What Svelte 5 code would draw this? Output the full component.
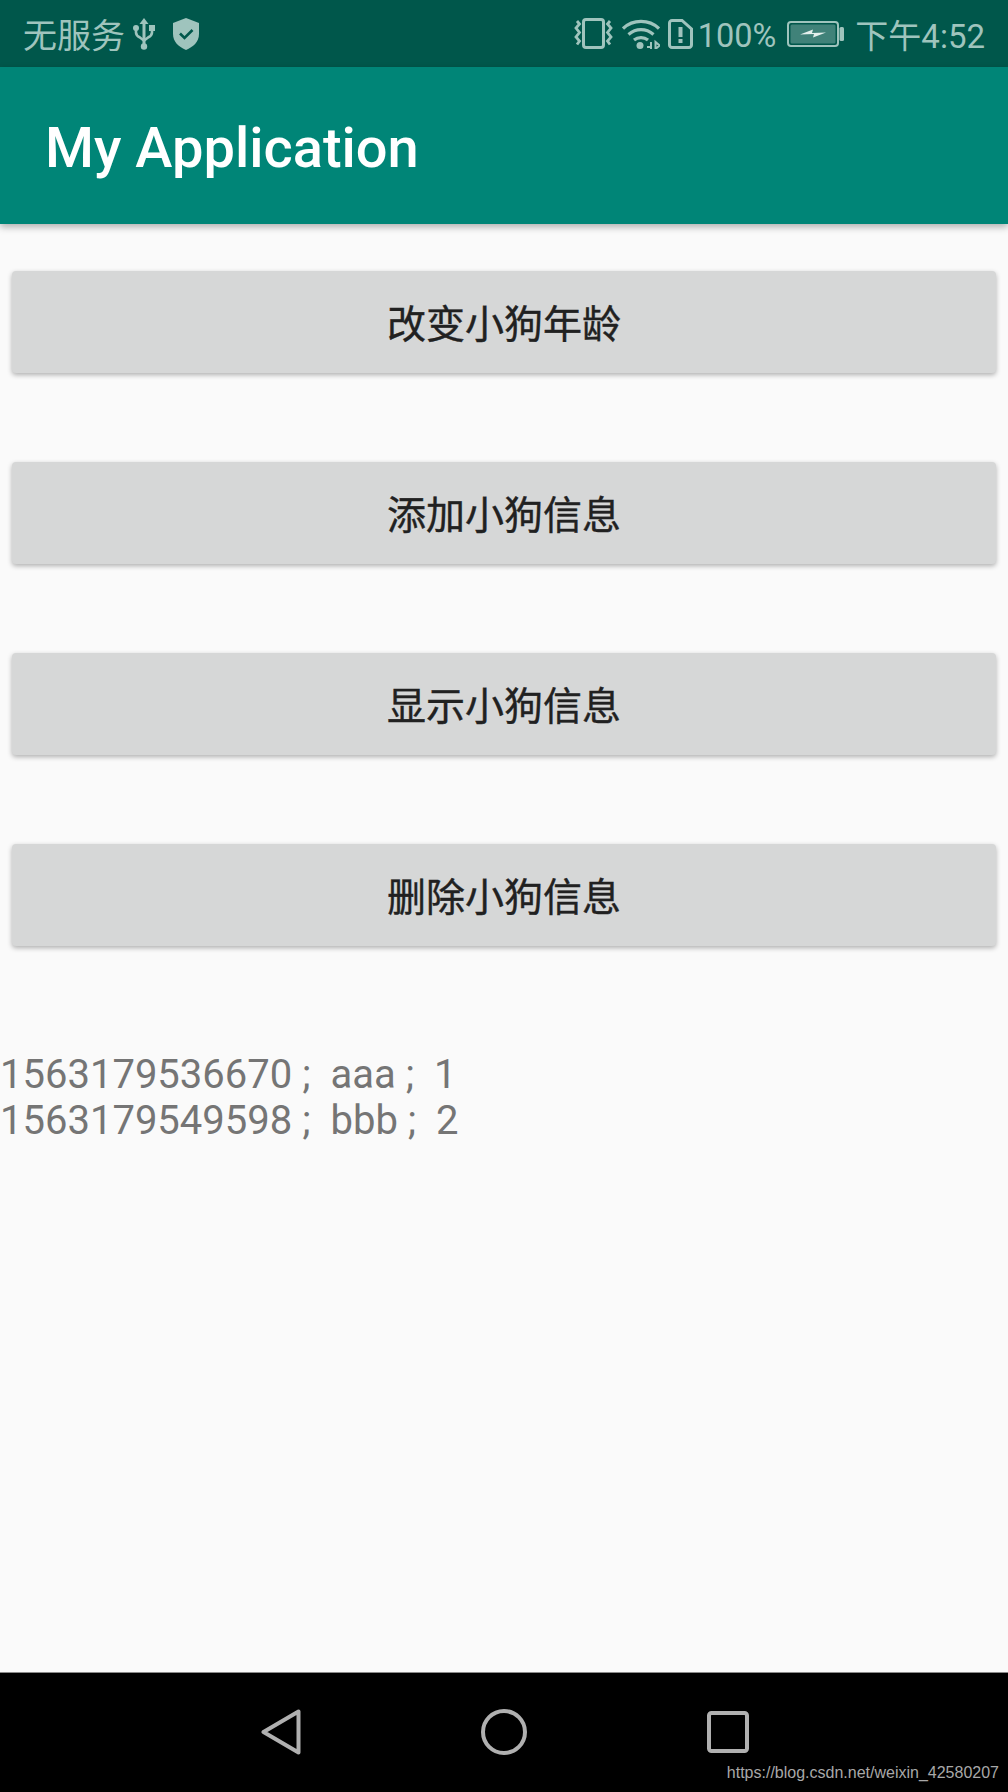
<script>
    const actions = ['改变小狗年龄', '添加小狗信息', '显示小狗信息', '删除小狗信息'];
    const dogs = [
        { id: '1563179536670', name: 'aaa', age: 1 },
        { id: '1563179549598', name: 'bbb', age: 2 },
    ];
</script>

<div class="phone">
    <header class="status">
        <div class="status-left">
            <span class="carrier">无服务</span>
            <svg class="usb" viewBox="0 0 22 32" width="22" height="32">
                <circle cx="11" cy="28.500" r="3.200" fill="currentColor" />
                <path d="M11 3v26" stroke="currentColor" stroke-width="3" />
                <path d="M11 0l4.500 6h-9z" fill="currentColor" />
                <path d="M3 11v3.500c0 3 2 4 4 5l4 3 4-3c2-1 4-2 4-5V11" fill="none" stroke="currentColor" stroke-width="2.600" />
                <circle cx="3" cy="10" r="3" fill="currentColor" />
                <rect x="16" y="7" width="6" height="6" fill="currentColor" />
            </svg>
            <svg class="shield" viewBox="0 0 28 32" width="28" height="32">
                <path d="M14 0l13 5v11c0 8-6 13-13 16C7 29 1 24 1 16V5z" fill="currentColor" />
                <path d="M8 15.500l4.500 4.500 8-8" fill="none" stroke="#00574b" stroke-width="2.600" />
            </svg>
        </div>
        <div class="status-right">
            <svg class="vibrate" viewBox="0 0 39 31" width="39" height="31">
                <rect x="9.500" y="1.500" width="20" height="28" rx="2.500" fill="none" stroke="currentColor" stroke-width="3" />
                <path d="M3 3l2.500 3-3.500 4 3.500 4.500L2 19l3.500 4L3 26.500M36 3l-2.500 3 3.500 4-3.500 4.500L37 19l-3.500 4 2.500 3.500" fill="none" stroke="currentColor" stroke-width="2.800" />
            </svg>
            <svg class="wifi" viewBox="0 0 38 30" width="38" height="30">
                <path d="M1 9.500C11 0 27 0 37 9.500" fill="none" stroke="currentColor" stroke-width="3.200" />
                <path d="M6.500 15.500c7.500-6.500 17.500-6.500 25 0" fill="none" stroke="currentColor" stroke-width="3.200" />
                <path d="M12 21c4-3.300 10-3.300 14 0" fill="none" stroke="currentColor" stroke-width="3.200" />
                <circle cx="18" cy="26.500" r="3.500" fill="currentColor" />
                <path d="M29 23v7M25 28h5M33.500 23v7l4-3.500z" fill="none" stroke="currentColor" stroke-width="2" />
            </svg>
            <svg class="sim" viewBox="0 0 25 30" width="25" height="30">
                <path d="M4 1.500h10l9.500 8.500v16a2.500 2.500 0 0 1-2.500 2.500H4A2.500 2.500 0 0 1 1.500 26V4A2.500 2.500 0 0 1 4 1.500z" fill="none" stroke="currentColor" stroke-width="3" />
                <rect x="10.500" y="8" width="4" height="10" fill="currentColor" />
                <rect x="10.500" y="20" width="4" height="4" fill="currentColor" />
            </svg>
            <span class="percent">100%</span>
            <svg class="battery" viewBox="0 0 57 26" width="57" height="26">
                <rect x="1" y="1" width="50" height="24" rx="3" fill="none" stroke="currentColor" stroke-width="2" />
                <rect x="3.500" y="3.500" width="45" height="19" rx="1.500" fill="currentColor" fill-opacity="0.4" />
                <rect x="52.500" y="6" width="4.500" height="14" rx="1.500" fill="currentColor" />
                <path d="M13 13.500l13-5-1 3.500 14-.5-13 5 1-3.500z" fill="#e3f0ed" />
            </svg>
            <span class="clock">下午4:52</span>
        </div>
    </header>

    <div class="appbar">
        <h1>My Application</h1>
    </div>

    <main>
        <div class="buttons">
            {#each actions as action}
                <button>{action}</button>
            {/each}
        </div>
        <div class="dog-list">
            {#each dogs as dog}
                <div>{dog.id} ;  {dog.name} ;  {dog.age}</div>
            {/each}
        </div>
    </main>

    <nav>
        <svg viewBox="0 0 40 46" width="40" height="46">
            <path d="M37.500 2.500v41L2.500 23z" fill="none" stroke="#b0b0b0" stroke-width="4" stroke-linejoin="round" />
        </svg>
        <svg viewBox="0 0 46 46" width="46" height="46">
            <circle cx="23" cy="23" r="21" fill="none" stroke="#b0b0b0" stroke-width="4" />
        </svg>
        <svg viewBox="0 0 42 42" width="42" height="42">
            <rect x="2" y="2" width="38" height="38" rx="2.500" fill="none" stroke="#b0b0b0" stroke-width="4" />
        </svg>
        <span class="watermark">https://blog.csdn.net/weixin_42580207</span>
    </nav>
</div>

<style>
    :global(body) {
        margin: 0;
        background: #fafafa;
    }

    .phone {
        height: 1792px;
        display: flex;
        flex-direction: column;
        font-family: Roboto, "Noto Sans CJK SC", sans-serif;
    }

    .status {
        height: 67px;
        flex: none;
        display: flex;
        justify-content: space-between;
        align-items: center;
        padding: 0 23px;
        background: #00574b;
        color: #9fc4bd;
        font-size: 33px;
    }

    .status-left,
    .status-right {
        display: flex;
        align-items: center;
    }

    .carrier {
        font-size: 34px;
    }

    .usb {
        margin-left: 8px;
    }

    .shield {
        margin-left: 17px;
    }

    .wifi {
        margin-left: 9px;
    }

    .sim {
        margin-left: 8px;
    }

    .percent {
        margin: 5px 0 0 5px;
        font-size: 32.5px;
    }

    .battery {
        margin-left: 11px;
    }

    .clock {
        margin-left: 11px;
    }

    .appbar {
        height: 157px;
        flex: none;
        display: flex;
        align-items: center;
        padding: 5px 0 0 45px;
        box-sizing: border-box;
        background: #008577;
        box-shadow: 0 3px 7px rgba(0, 0, 0, 0.3);
        position: relative;
    }

    h1 {
        margin: 0;
        font-size: 56px;
        font-weight: 500;
        color: #fff;
    }

    main {
        flex: 1;
        padding-top: 47px;
    }

    .buttons {
        display: flex;
        flex-direction: column;
        gap: 89px;
        padding: 0 12px;
    }

    button {
        height: 102px;
        padding: 0 0 2px;
        border: none;
        border-radius: 4px;
        background: #d6d7d7;
        box-shadow: 0 2px 5px rgba(0, 0, 0, 0.3);
        color: #212121;
        font-family: inherit;
        font-size: 39px;
        -webkit-text-stroke: 0.4px #212121;
    }

    .dog-list {
        margin-top: 106px;
        font-size: 40px;
        line-height: 46px;
        color: #757575;
        white-space: pre;
    }

    nav {
        height: 120px;
        flex: none;
        position: relative;
        display: flex;
        align-items: center;
        justify-content: center;
        gap: 0 180px;
        padding: 0 0 2px 2px;
        border-top: 1px solid #8a8a8a;
        background: #000;
        box-sizing: border-box;
    }

    .watermark {
        position: absolute;
        right: 9px;
        bottom: 10px;
        font-family: "Liberation Sans", sans-serif;
        font-size: 16px;
        color: #a8a8a8;
    }
</style>
